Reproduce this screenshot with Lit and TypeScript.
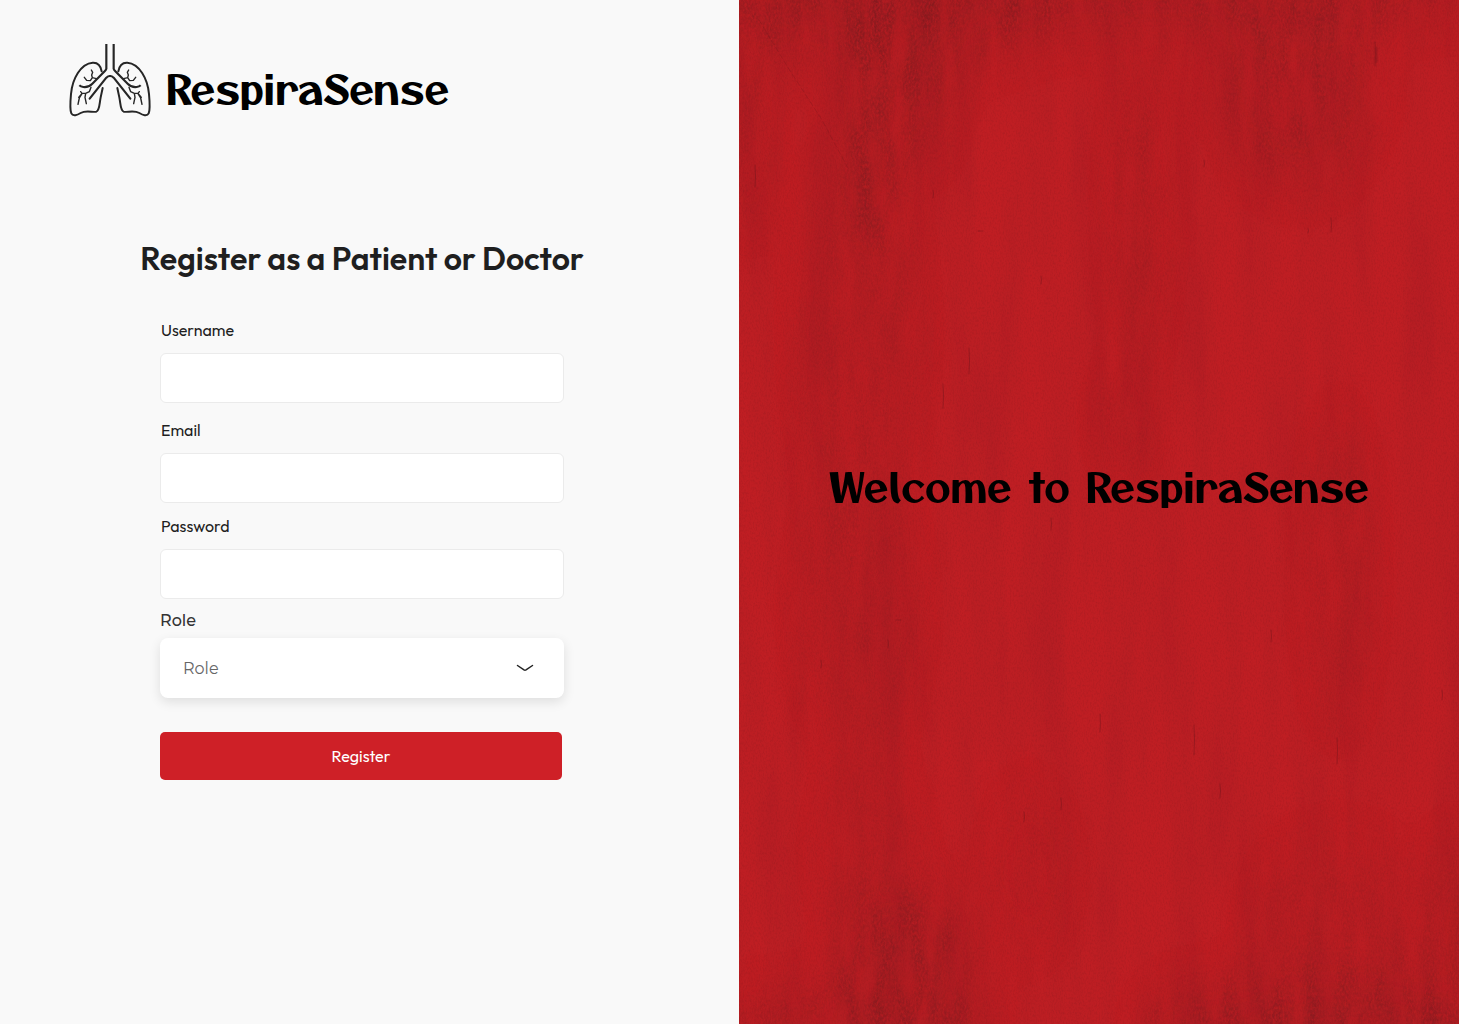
import { LitElement, html, css, svg } from "lit";
import { customElement } from "lit/decorators.js";

// One lung with its bronchi; the second is this one mirrored about x = 150.
const lung = svg`
  <g fill="none" stroke="#262626" stroke-linecap="round" stroke-linejoin="round">
    <path stroke-width="6.5" stroke-linecap="butt" d="M139 24V98Q138 102 134 106L97 143Q85 155 70 153Q62 152 58 148" />
    <path stroke-width="6" d="M125 106C122 88 114 79 98 80C62 83 37 128 33 174C31 196 29 222 34 232C39 242 52 237 62 231C78 222 98 230 109 227C119 224 118 204 122 184L128 156" />
    <path stroke-width="6.5" d="M150 120Q144 120 139 125L89 188" />
    <path stroke-width="4.2" d="M109 128L97 125L95 117L98 109L94 102M97 125L91 134L80 133L73 124" />
    <path stroke-width="4.2" d="M93 154L88 167L77 172L66 172L56 184M66 172L62 167M77 172L75 184L79 203M66 173L58 186L54 205" />
  </g>`;

interface Blotch { x: number; y: number; rx: number; ry: number; o: number }

const blotches: Blotch[] = [
  { x: 150, y: 0, rx: 170, ry: 60, o: 0.6 },
  { x: 135, y: 120, rx: 28, ry: 130, o: 0.8 },
  { x: 190, y: 60, rx: 24, ry: 90, o: 0.6 },
  { x: 360, y: -20, rx: 420, ry: 42, o: 0.7 },
  { x: 560, y: 80, rx: 80, ry: 100, o: 0.5 },
  { x: 400, y: 210, rx: 22, ry: 150, o: 0.4 },
  { x: 10, y: 110, rx: 14, ry: 120, o: 0.45 },
  { x: 120, y: 330, rx: 60, ry: 200, o: 0.25 },
  { x: 120, y: 610, rx: 60, ry: 140, o: 0.25 },
  { x: 385, y: 420, rx: 22, ry: 40, o: 0.4 },
  { x: 600, y: 570, rx: 30, ry: 160, o: 0.25 },
  { x: 290, y: 870, rx: 40, ry: 80, o: 0.2 },
  { x: 130, y: 850, rx: 50, ry: 90, o: 0.25 },
  { x: 165, y: 970, rx: 65, ry: 75, o: 0.75 },
  { x: 120, y: 1030, rx: 140, ry: 30, o: 0.7 },
  { x: 600, y: 930, rx: 90, ry: 90, o: 0.25 },
  { x: 570, y: 1030, rx: 170, ry: 42, o: 0.85 },
  { x: 680, y: 1030, rx: 70, ry: 30, o: 1 },
  { x: 715, y: 920, rx: 18, ry: 80, o: 0.6 },
];

// Short scratches: x, y, length.
const scratches = [
  [636, 42, 24], [230, 348, 26], [204, 384, 24], [312, 518, 12], [361, 714, 18],
  [455, 725, 30], [322, 798, 12], [285, 812, 10], [481, 784, 14], [598, 738, 26],
  [532, 630, 12], [703, 690, 10], [82, 660, 8], [149, 640, 8], [194, 190, 8],
  [16, 165, 22], [592, 218, 14], [569, 228, 5], [465, 160, 7], [302, 276, 8],
];

@customElement("grunge-wall")
export class GrungeWall extends LitElement {
  static styles = css`
    :host { display: block; overflow: hidden; }
    .art { display: block; width: 100%; height: 100%; }
  `;

  render() {
    const shapes = blotches.map(
      (b) => svg`<ellipse cx=${b.x} cy=${b.y} rx=${b.rx} ry=${b.ry} opacity=${b.o} />`
    );
    return html`
      <svg class="art" viewBox="0 0 720 1024" preserveAspectRatio="none" aria-hidden="true">
        <defs>
          <filter id="soft" filterUnits="userSpaceOnUse" x="-200" y="-200" width="1120" height="1424" color-interpolation-filters="sRGB">
            <feGaussianBlur stdDeviation="18 30" />
          </filter>
          <filter id="rough" filterUnits="userSpaceOnUse" x="0" y="0" width="720" height="1024" color-interpolation-filters="sRGB">
            <feTurbulence type="fractalNoise" baseFrequency="0.06 0.016" numOctaves="6" seed="7" />
            <feColorMatrix values="0 0 0 0 0  0 0 0 0 0  0 0 0 0 0  2.4 0 0 0 -0.7" result="wide" />
            <feTurbulence type="fractalNoise" baseFrequency="0.5 0.28" numOctaves="3" seed="9" />
            <feColorMatrix values="0 0 0 0 0  0 0 0 0 0  0 0 0 0 0  2.4 0 0 0 -0.6" result="fine" />
            <feComposite in="SourceGraphic" in2="wide" operator="in" />
            <feComposite in2="fine" operator="in" />
          </filter>
          <filter id="streaks" x="0" y="0" width="100%" height="100%" color-interpolation-filters="sRGB">
            <feTurbulence type="fractalNoise" baseFrequency="0.03 0.004" numOctaves="5" seed="12" />
            <feColorMatrix values="0 0 0 0 0.55  0 0 0 0 0.1  0 0 0 0 0.13  0.4 0 0 0 -0.14" />
          </filter>
          <filter id="grain" x="0" y="0" width="100%" height="100%" color-interpolation-filters="sRGB">
            <feTurbulence type="fractalNoise" baseFrequency="0.7 0.4" numOctaves="2" seed="3" />
            <feColorMatrix values="0 0 0 0 0.35  0 0 0 0 0.08  0 0 0 0 0.1  0.3 0 0 0 -0.13" />
          </filter>
        </defs>
        <rect width="720" height="1024" fill="#bf1e23" />
        <rect width="720" height="1024" filter="url(#streaks)" />
        <g filter="url(#soft)" fill="#841a20" opacity="0.22">${shapes}</g>
        <g filter="url(#rough)">
          <g filter="url(#soft)" fill="#641a1e" opacity="0.55">${shapes}</g>
        </g>
        <rect width="720" height="1024" filter="url(#grain)" />
        <g fill="none" stroke="#5c1219" stroke-linecap="round" opacity="0.35">
          ${scratches.map(([x, y, l]) => svg`<path d="M${x} ${y}q1 ${l / 2} 0 ${l}" />`)}
          <path opacity="0.6" stroke-dasharray="5 3" d="M20 20L48 66L83 120L110 170" />
          <path d="M239 231h5M157 620h5" />
          <path stroke-width="3" opacity="0.7" d="M637 48v14" />
        </g>
      </svg>
    `;
  }
}

@customElement("app-root")
export class AppRoot extends LitElement {
  static styles = css`
    :host {
      display: block;
      color: #1f1f1f;
      font-family: Outfit, Lato, "Open Sans", sans-serif;
    }
    * { box-sizing: border-box; }
    .page {
      display: grid;
      grid-template-columns: 739fr 720fr;
      min-height: 100vh;
    }
    .left {
      background: #f9f9f9;
      padding: 36px 75px 36px 60px;
    }
    .brand { display: flex; align-items: center; gap: 6px; }
    .lungs { width: 100px; height: 90px; flex: none; }
    .display {
      margin: 0;
      color: #000;
      font-family: "Otomanopee One", Lato, sans-serif;
      font-size: 40px;
      line-height: 56px;
      font-weight: 400;
    }
    .brand .display { padding-top: 14px; }
    .title {
      margin: 112px 0 42px;
      font-size: 32px;
      line-height: 40px;
      font-weight: 600;
      text-align: center;
    }
    .form {
      display: flex;
      flex-direction: column;
      max-width: 404px;
      margin: 0 auto;
      font-size: 16px;
      line-height: 20px;
    }
    .field { display: flex; flex-direction: column; gap: 13px; margin-bottom: 17px; }
    .field.near { margin-bottom: 13px; }
    .field.tight { margin-bottom: 12px; }
    .field.role { gap: 7px; margin-bottom: 34px; font-family: Montserrat, "Open Sans", sans-serif; }
    .label { padding-left: 1px; }
    .role .label { padding-left: 0; color: #333; font-weight: 500; }
    .input {
      width: 100%;
      height: 50px;
      padding: 0 16px;
      border: 1px solid #ebebeb;
      border-radius: 6px;
      background: #fff;
      color: inherit;
      font: inherit;
    }
    .picker {
      display: grid;
      grid-template-columns: 1fr 18px;
      align-items: center;
      height: 60px;
      padding-right: 30px;
      border-radius: 8px;
      background: #fff;
      box-shadow: 0 4px 12px rgba(0, 0, 0, 0.11);
    }
    .select {
      grid-area: 1 / 1 / 2 / 3;
      height: 60px;
      padding: 2px 24px 0 23px;
      border: 0;
      background: transparent;
      appearance: none;
      color: #666;
      font: inherit;
      font-weight: 400;
    }
    .chevron { grid-area: 1 / 2; width: 18px; height: 10px; pointer-events: none; }
    .submit {
      height: 48px;
      margin-right: 2px;
      border: 0;
      border-radius: 5px;
      background: #ce2027;
      color: #fff;
      font: inherit;
      cursor: pointer;
    }
    .right { display: grid; background: #bc1d22; }
    .wall { grid-area: 1 / 1; min-height: 0; }
    .welcome {
      grid-area: 1 / 1;
      z-index: 1;
      align-self: center;
      justify-self: center;
      padding-bottom: 52px;
      text-align: center;
    }
  `;

  render() {
    return html`
      <main class="page">
        <section class="left">
          <header class="brand">
            <svg class="lungs" viewBox="0 0 300 270" aria-hidden="true">
              ${lung}
              <g transform="translate(300 0) scale(-1 1)">${lung}</g>
            </svg>
            <p class="display">RespiraSense</p>
          </header>
          <h1 class="title">Register as a Patient or Doctor</h1>
          <form class="form" @submit=${(e: Event) => e.preventDefault()}>
            <div class="field">
              <label class="label" for="username">Username</label>
              <input class="input" id="username" type="text" autocomplete="username" />
            </div>
            <div class="field near">
              <label class="label" for="email">Email</label>
              <input class="input" id="email" type="email" autocomplete="email" />
            </div>
            <div class="field tight">
              <label class="label" for="password">Password</label>
              <input class="input" id="password" type="password" autocomplete="new-password" />
            </div>
            <div class="field role">
              <label class="label" for="role">Role</label>
              <div class="picker">
                <select class="select" id="role">
                  <option value="">Role</option>
                  <option>Patient</option>
                  <option>Doctor</option>
                </select>
                <svg class="chevron" viewBox="0 0 18 10" aria-hidden="true">
                  <path d="M1.5 2.5L8 6.9Q9 7.5 10 6.9L16.5 2.5" fill="none" stroke="#222" stroke-width="1.5" stroke-linecap="round" stroke-linejoin="round" />
                </svg>
              </div>
            </div>
            <button class="submit" type="submit">Register</button>
          </form>
        </section>
        <section class="right">
          <grunge-wall class="wall"></grunge-wall>
          <h2 class="display welcome">Welcome to RespiraSense</h2>
        </section>
      </main>
    `;
  }
}
